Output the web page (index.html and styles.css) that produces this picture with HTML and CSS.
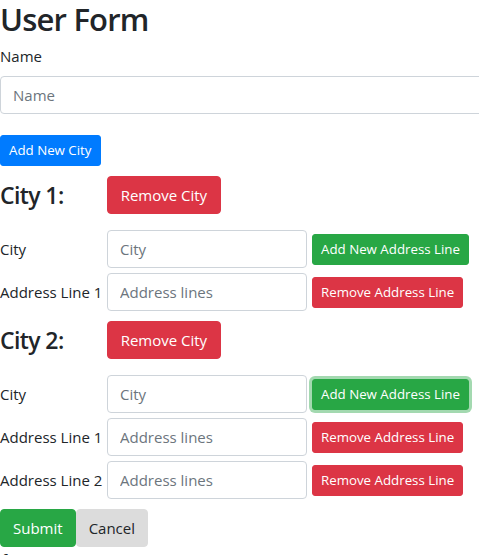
FILE: index.html
```html
<!DOCTYPE html>
<html lang="en">
<head>
<meta charset="UTF-8">
<meta name="viewport" content="width=device-width, initial-scale=1.0">
<title>User Form</title>
<link rel="stylesheet" href="styles.css">
</head>
<body>
    <h1>User Form</h1>
    <form id="userForm">
        <div class="campo">
            <label for="name">Name</label>
            <input type="text" id="name" class="control control-wide" placeholder="Name">
        </div>
        <button type="button" class="btn btn-sm btn-blue">Add New City</button>

        <div class="city">
            <div class="city-head">
                <h4>City 1:</h4>
                <button type="button" class="btn btn-red">Remove City</button>
            </div>
            <div class="linha">
                <label>City</label>
                <input type="text" class="control" placeholder="City">
                <button type="button" class="btn btn-sm btn-green">Add New Address Line</button>
            </div>
            <div class="linha">
                <label>Address Line 1</label>
                <input type="text" class="control" placeholder="Address lines">
                <button type="button" class="btn btn-sm btn-red">Remove Address Line</button>
            </div>
        </div>

        <div class="city">
            <div class="city-head">
                <h4>City 2:</h4>
                <button type="button" class="btn btn-red">Remove City</button>
            </div>
            <div class="linha">
                <label>City</label>
                <input type="text" class="control" placeholder="City">
                <button type="button" class="btn btn-sm btn-green btn-focus">Add New Address Line</button>
            </div>
            <div class="linha">
                <label>Address Line 1</label>
                <input type="text" class="control" placeholder="Address lines">
                <button type="button" class="btn btn-sm btn-red">Remove Address Line</button>
            </div>
            <div class="linha">
                <label>Address Line 2</label>
                <input type="text" class="control" placeholder="Address lines">
                <button type="button" class="btn btn-sm btn-red">Remove Address Line</button>
            </div>
        </div>

        <div class="acoes">
            <button type="submit" class="btn btn-green">Submit</button>
            <button type="button" class="btn btn-gray">Cancel</button>
        </div>
    </form>
    <div class="saida">form</div>
</body>
</html>
```

FILE: styles.css
```css
html {
    overflow: hidden;
}

body {
    font-family: "Open Sans", "Liberation Sans", sans-serif;
    font-size: 15px;
    line-height: 24px;
    color: #212529;
    margin: 0;
    padding: 0;
}

h1,
h4 {
    font-weight: 600;
    margin: 0;
}

h1 {
    font-size: 31px;
    line-height: 38px;
    letter-spacing: -0.8px;
    margin-bottom: 6px;
}

h4 {
    font-size: 23px;
    line-height: 28px;
    letter-spacing: -0.6px;
}

.campo {
    margin-bottom: 21px;
}

.campo label {
    display: block;
    margin-bottom: 8px;
}

.control {
    box-sizing: border-box;
    height: 38px;
    width: 200px;
    padding: 6px 12px;
    font-family: inherit;
    font-size: 15px;
    color: #495057;
    background: #fff;
    border: 1px solid #ced4da;
    border-radius: 4px;
    margin: 0;
}

.control::placeholder {
    color: #6c757d;
}

.control-wide {
    width: 520px;
}

.btn {
    display: inline-block;
    font-family: inherit;
    font-size: 15px;
    line-height: 24px;
    padding: 6px 12px;
    border: 1px solid transparent;
    border-radius: 4px;
    color: #fff;
    cursor: pointer;
    margin: 0;
}

.btn-sm {
    font-size: 13.3px;
    line-height: 21px;
    padding: 4px 8px;
    border-radius: 3px;
}

.btn-blue {
    background-color: #007bff;
    border-color: #007bff;
}

.btn-red {
    background-color: #dc3545;
    border-color: #dc3545;
}

.btn-green {
    background-color: #28a745;
    border-color: #28a745;
}

.btn-focus {
    box-shadow: 0 0 0 3px rgba(72, 180, 97, 0.5);
}

.btn-gray {
    background-color: #dcdcdc;
    border-color: #dcdcdc;
    color: #212529;
}

.city-head {
    display: flex;
    align-items: center;
    gap: 43px;
    margin-top: 10px;
    margin-bottom: 16px;
}

.city-head .btn {
    padding: 6px 13px;
}

.linha {
    display: flex;
    align-items: center;
    margin-bottom: 5px;
}

.linha label {
    flex: none;
    width: 107px;
}

.linha .btn {
    margin-left: 5px;
}

.acoes {
    display: flex;
    margin-top: 10px;
}

.saida {
    line-height: 19px;
    padding-left: 2px;
    margin-top: 3px;
}
```
